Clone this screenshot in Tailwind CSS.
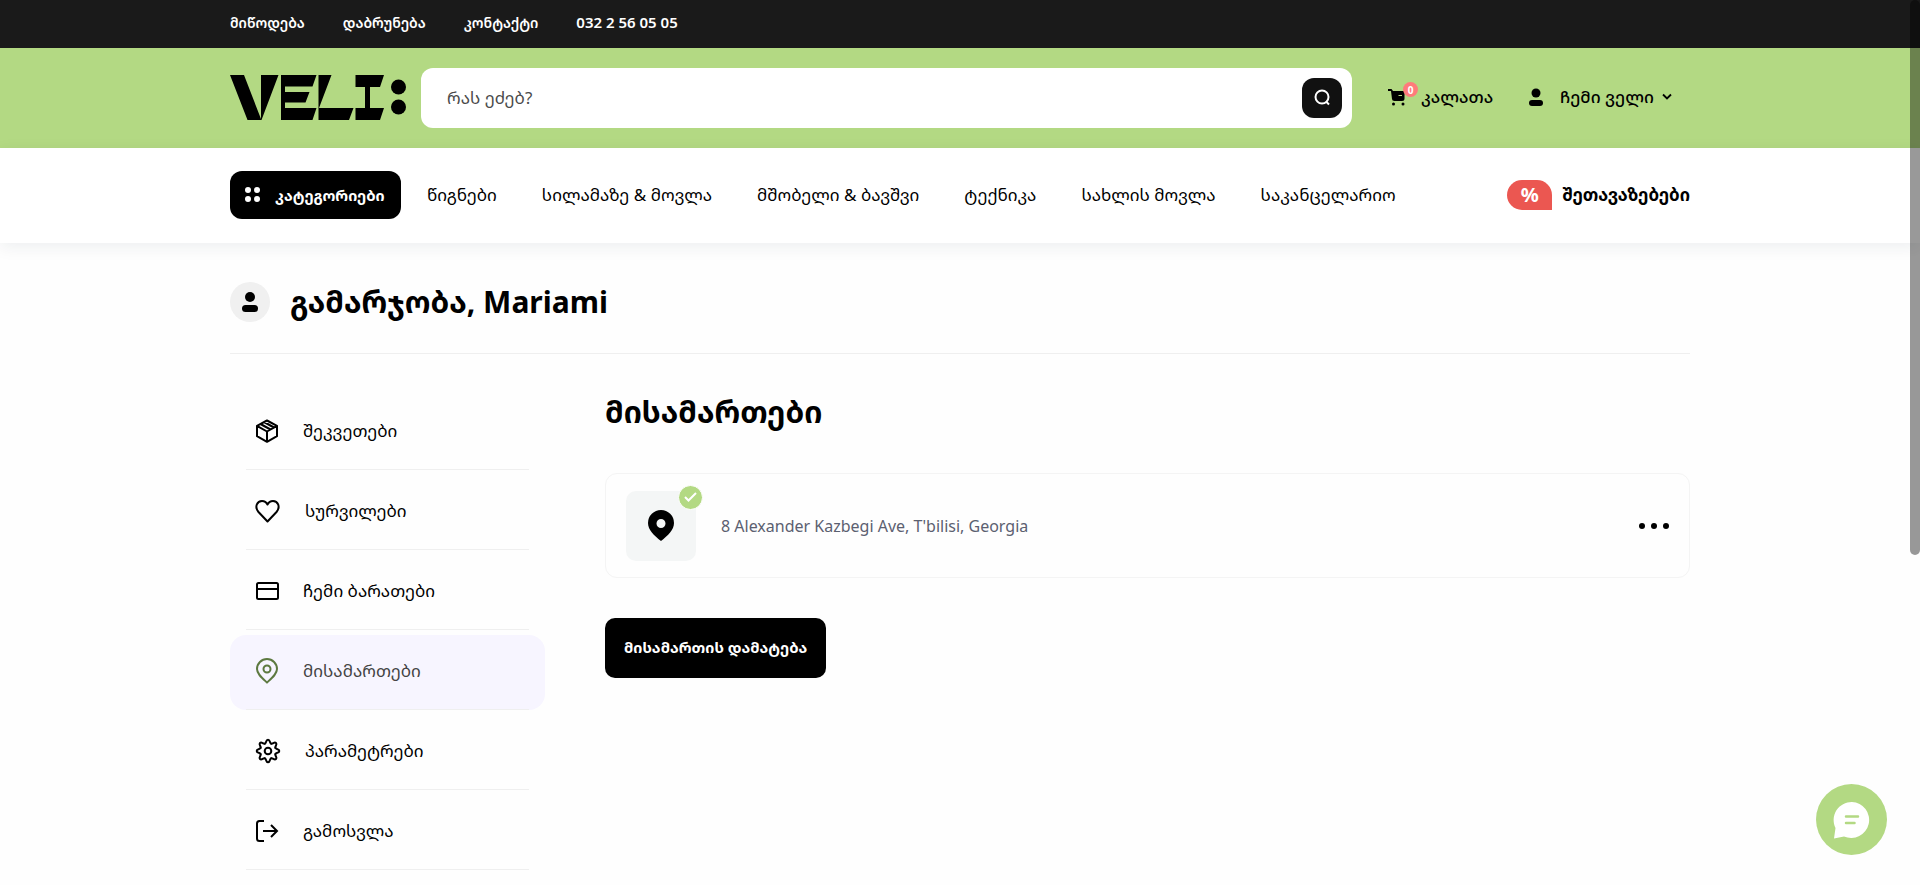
<!DOCTYPE html>
<html lang="ka">
<head>
<meta charset="utf-8">
<meta name="viewport" content="width=device-width, initial-scale=1">
<title>VELI</title>
<script src="https://cdn.jsdelivr.net/npm/@tailwindcss/browser@4"></script>
</head>
<body class="min-h-screen bg-[#fefefe] font-['Noto_Sans','Noto_Sans_Georgian','DejaVu_Sans',sans-serif] text-[17px] leading-6 text-black">

<div class="bg-[#1a1a1a]">
  <nav class="mx-auto flex h-12 max-w-[1460px] items-center gap-[38px] pb-[2px] text-sm font-semibold text-white">
    <a href="#">მიწოდება</a>
    <a href="#">დაბრუნება</a>
    <a href="#">კონტაქტი</a>
    <a href="#" class="text-[15px]">032 2 56 05 05</a>
  </nav>
</div>

<header class="bg-[#b3d983]">
  <div class="mx-auto flex h-[100px] max-w-[1460px] items-center">
    <a href="#" aria-label="VELI" class="mr-[15px] shrink-0">
      <svg class="block" width="176" height="46" viewBox="0 0.500 176 46">
        <path d="M0 0.500H14L31 44.500V0.500H48.500L31.500 45.500H17.500Z"/>
        <path d="M51 0.500H86.500L82.500 12H55V17.500H79.500L75.500 28H55V33.500H86.500L82.500 45.500H51Z"/>
        <path d="M88.500 0.500H101.500L89 33.500H123.500L119 45.500H88.500Z"/>
        <path d="M125.500 0.500H154L150 12.500H140V33.500H154L150 45.500H125.500V33.500H135V12.500H125.500Z"/>
        <circle cx="168.500" cy="12.500" r="7.500"/><circle cx="168.500" cy="32.500" r="7.500"/>
      </svg>
    </a>
    <form class="flex h-[60px] flex-1 items-center rounded-xl bg-white pr-[10px] pl-[26px]">
      <input type="text" aria-label="ძებნა" placeholder="რას ეძებ?" class="h-full flex-1 bg-transparent pb-[2px] outline-none placeholder:text-[#4b4b4b]">
      <button type="button" aria-label="ძებნა" class="flex size-10 items-center justify-center rounded-xl bg-[#111]">
        <svg width="20" height="20" viewBox="0 0 20 20" fill="none" stroke="#fff" stroke-width="2"><circle cx="10" cy="9" r="6.500"/><path d="M14 13.500L17 16.500"/></svg>
      </button>
    </form>
    <a href="#" class="ml-9 flex w-[103px] shrink-0 items-center pb-[2px] font-medium whitespace-nowrap">
      <span class="relative block w-[33px] shrink-0">
        <svg width="18" height="18" viewBox="0 0 18 18"><path d="M0 1H3.500L5 3H16.500V10.500Q16.500 13 14 13H6.500Q4 13 4 11L3 3H0Z"/><circle cx="5.500" cy="16" r="1.500"/><circle cx="15" cy="16" r="1.500"/><path d="M10.500 7.500H14" stroke="#b3d983"/></svg>
        <span class="absolute -top-[6px] left-[15px] flex size-[15px] items-center justify-center rounded-full bg-[#ff7b7b] text-[10px] font-bold text-white">0</span>
      </span>
      კალათა
    </a>
    <button type="button" class="ml-[38px] flex w-[161px] shrink-0 items-center pb-[2px] font-medium whitespace-nowrap">
      <svg class="mr-[17px] shrink-0" width="14" height="18" viewBox="0 0 14 18"><circle cx="7" cy="5" r="4.500"/><rect y="12" width="14" height="6" rx="3"/></svg>
      ჩემი ველი
      <svg class="ml-2 shrink-0" width="10" height="10" viewBox="0 0 10 10" fill="none" stroke="#000" stroke-width="1.800"><path d="M1 2.500L5 6.500L9 2.500"/></svg>
    </button>
  </div>
</header>

<div class="relative bg-white shadow-[0_4px_16px_rgba(20,40,60,0.07)]">
  <div class="mx-auto flex h-[95px] max-w-[1460px] items-center pb-[2px] whitespace-nowrap">
    <button type="button" class="flex h-12 w-[171px] shrink-0 items-center gap-[15px] rounded-xl bg-black pl-[15px] text-[15px] font-bold text-white">
      <svg width="15" height="15" viewBox="0 0 15 15" fill="#fff"><circle cx="3" cy="3" r="3"/><circle cx="12" cy="3" r="3"/><circle cx="3" cy="12" r="3"/><circle cx="12" cy="12" r="3"/></svg>
      კატეგორიები
    </button>
    <nav class="ml-[26px] flex gap-[45px]">
      <a href="#">წიგნები</a>
      <a href="#">სილამაზე &amp; მოვლა</a>
      <a href="#">მშობელი &amp; ბავშვი</a>
      <a href="#">ტექნიკა</a>
      <a href="#">სახლის მოვლა</a>
      <a href="#">საკანცელარიო</a>
    </nav>
    <a href="#" class="ml-auto flex items-center gap-[10px] font-bold">
      <span class="flex h-[30px] w-[45px] items-center justify-center rounded-[15px] rounded-br-none bg-[#eb5751] text-xl text-white">%</span>
      შეთავაზებები
    </a>
  </div>
</div>

<main class="mx-auto max-w-[1460px]">
  <div class="flex h-[111px] items-center gap-5 border-b border-[#efefef] pt-2">
    <span class="flex size-10 items-center justify-center rounded-full bg-[#f0f0f0]">
      <svg width="16" height="20" viewBox="0 0 16 20"><circle cx="8" cy="5" r="5"/><rect y="13" width="16" height="7" rx="3.500"/></svg>
    </span>
    <h1 class="text-[30px] leading-9 font-bold">გამარჯობა, Mariami</h1>
  </div>

  <div class="flex items-start gap-[60px]">
    <nav class="w-[315px] shrink-0 pt-9">
      <a href="#" class="flex h-20 items-center px-4"><span class="flex h-full flex-1 items-center gap-6 border-b border-[#efefef] pt-[2px] pl-[9px]">
        <svg width="24" height="24" viewBox="0 0 24 24" fill="none" stroke="#000" stroke-width="2" stroke-linejoin="round"><path d="M12 1.500L22 6.800V17.200L12 22.800L2 17.200V6.800ZM2 6.800L12 12.500L22 6.800M12 12.500V22.800M5.500 5L15.500 10.500M9 3L19 8.500"/></svg>შეკვეთები</span></a>
      <a href="#" class="flex h-20 items-center px-4"><span class="flex h-full flex-1 items-center gap-6 border-b border-[#efefef] pt-[2px] pl-[9px]">
        <svg width="26" height="24" viewBox="0 0 26 24" fill="none" stroke="#000" stroke-width="2" stroke-linejoin="round"><path d="M12.500 22.500L3.500 13C-1 7.500 2.500 2 7 2C9.500 2 11.500 3.500 12.500 5.500C13.500 3.500 15.500 2 18 2C22.500 2 26 7.500 21.500 13Z"/></svg>სურვილები</span></a>
      <a href="#" class="flex h-20 items-center px-4"><span class="flex h-full flex-1 items-center gap-6 border-b border-[#efefef] pt-[2px] pl-[9px]">
        <svg width="24" height="18" viewBox="0 0 24 18" fill="none" stroke="#000" stroke-width="2"><rect x="2" y="1" width="21" height="16" rx="1.500"/><path d="M2 7H23"/></svg>ჩემი ბარათები</span></a>
      <a href="#" aria-current="page" class="relative flex h-20 items-center px-4 text-[#444]"><span class="absolute inset-x-0 top-[5px] bottom-0 rounded-[16px] bg-[#f7f5ff]"></span><span class="relative flex h-full flex-1 items-center gap-6 border-b border-[#efefef] pt-[2px] pl-[9px]">
        <svg width="24" height="26" viewBox="0 0 24 26" fill="none" stroke="#5d7940" stroke-width="2"><path d="M12 24.500C7 20 2 16 2 11A10 10 0 0 1 22 11C22 16 17 20 12 24.500Z"/><circle cx="12" cy="11" r="3.500"/></svg>მისამართები</span></a>
      <a href="#" class="flex h-20 items-center px-4"><span class="flex h-full flex-1 items-center gap-6 border-b border-[#efefef] pt-[2px] pl-[9px]">
        <svg width="26" height="26" viewBox="-13 -13 26 26" fill="none" stroke="#000" stroke-width="2" stroke-linecap="round">
          <defs><path id="tooth" d="M-3.060 -7.390C-1.200 -8.200 -2.400 -11.300 0 -11.300S1.200 -8.200 3.060 -7.390"/></defs>
          <use href="#tooth"/><use href="#tooth" transform="rotate(45)"/><use href="#tooth" transform="rotate(90)"/><use href="#tooth" transform="rotate(135)"/><use href="#tooth" transform="rotate(180)"/><use href="#tooth" transform="rotate(225)"/><use href="#tooth" transform="rotate(270)"/><use href="#tooth" transform="rotate(315)"/>
          <circle r="3.300"/>
        </svg>პარამეტრები</span></a>
      <a href="#" class="flex h-20 items-center px-4"><span class="flex h-full flex-1 items-center gap-6 border-b border-[#efefef] pt-[2px] pl-[9px]">
        <svg width="24" height="22" viewBox="0 0 24 22" fill="none" stroke="#000" stroke-width="2"><path d="M9 1H4.500Q2 1 2 3.500V18.500Q2 21 4.500 21H9M8 11H22M16 5L22 11L16 17"/></svg>გამოსვლა</span></a>
    </nav>

    <section class="min-w-0 flex-1 pt-10">
      <h2 class="text-[30px] leading-9 font-bold">მისამართები</h2>
      <div class="mt-[43px] flex h-[105px] items-center rounded-xl border border-[#f4f4f4] px-5">
        <span class="relative flex size-[70px] items-center justify-center rounded-[10px] bg-[#f4f6f6]">
          <svg width="26" height="31" viewBox="0 0 26 31"><path fill-rule="evenodd" d="M13 31C6 25.500 0 20 0 13A13 13 0 0 1 26 13C26 20 20 25.500 13 31ZM13 9A4.500 4.500 0 1 0 13 18A4.500 4.500 0 1 0 13 9Z"/></svg>
          <span class="absolute -top-[6px] -right-[7px] flex size-[25px] items-center justify-center rounded-full border border-white bg-[#b3d983]">
            <svg width="13" height="10" viewBox="0 0 13 10" fill="none" stroke="#fff" stroke-width="2"><path d="M1 5L4.500 8.500L12 1"/></svg>
          </span>
        </span>
        <span class="ml-[25px] text-base text-[#5b6070]">8 Alexander Kazbegi Ave, T'bilisi, Georgia</span>
        <button type="button" aria-label="მეტი" class="ml-auto">
          <svg width="30" height="6" viewBox="0 0 30 6"><circle cx="3" cy="3" r="3"/><circle cx="15" cy="3" r="3"/><circle cx="27" cy="3" r="3"/></svg>
        </button>
      </div>
      <button type="button" class="mt-10 h-[60px] rounded-[10px] bg-black px-[19px] pb-[2px] text-[15px] font-bold text-white">მისამართის დამატება</button>
    </section>
  </div>
</main>

<button type="button" aria-label="ჩატი" class="fixed right-[33px] bottom-[30px] flex size-[71px] items-center justify-center rounded-full bg-[#b3d983]">
  <svg width="38" height="38" viewBox="0 0 38 38"><path fill="#fff" d="M19 1A18 18 0 1 1 11 35.500L1 37.500L2.500 27A18 18 0 0 1 19 1Z"/><path d="M13 15.500H25M13 22H21.500" stroke="#b3d983" stroke-width="2.500" stroke-linecap="round"/></svg>
</button>
<div class="fixed top-0 right-0 h-[555px] w-[10px] rounded-full bg-black/40"></div>
</body>
</html>
